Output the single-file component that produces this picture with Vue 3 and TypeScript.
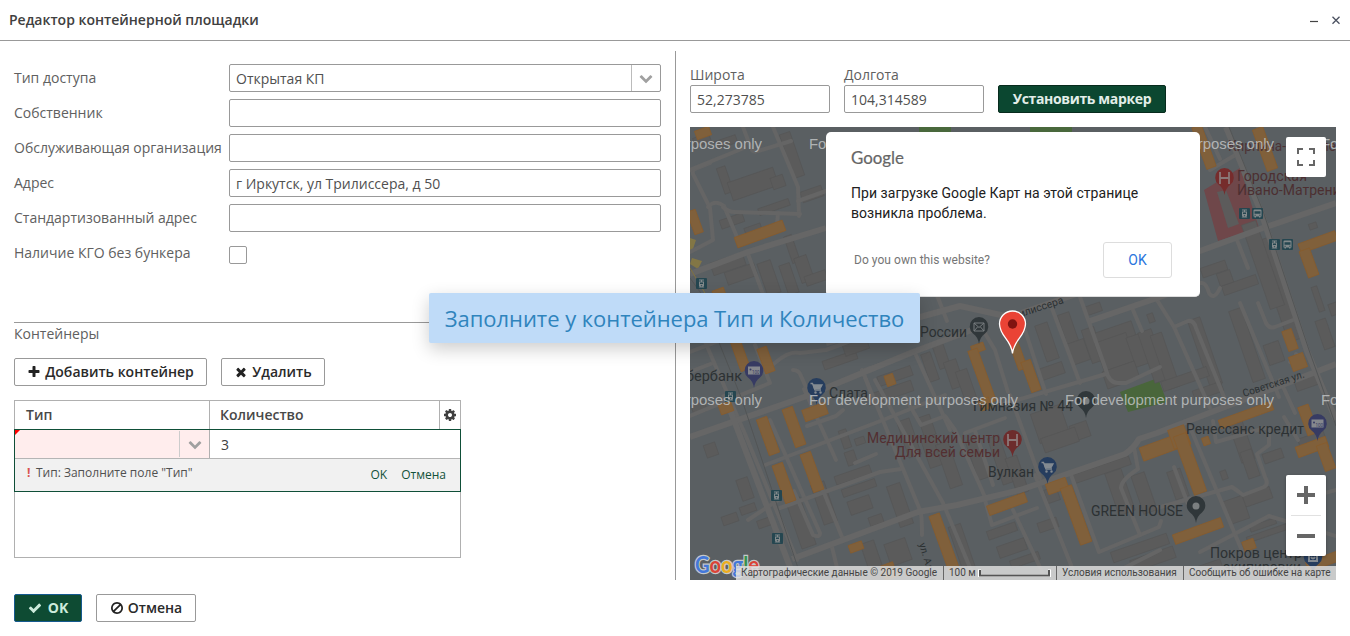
<script setup lang="ts">
import { ref } from 'vue'

interface Field { label: string; value: string; select?: boolean }
type Box = [number, number, number, number, number?]
interface Pin { x: number; y: number; color: string; kind: string }
interface Label { x: number; y: number; text: string; color?: string; end?: boolean; size?: number; rotate?: number; width?: number }

const fields = ref<Field[]>([
  { label: 'Тип доступа', value: 'Открытая КП', select: true },
  { label: 'Собственник', value: '' },
  { label: 'Обслуживающая организация', value: '' },
  { label: 'Адрес', value: 'г Иркутск, ул Трилиссера, д 50' },
  { label: 'Стандартизованный адрес', value: '' },
])

const icons: Record<string, string> = {
  plus: 'M1600 736v192q0 40-28 68t-68 28h-416v416q0 40-28 68t-68 28h-192q-40 0-68-28t-28-68v-416h-416q-40 0-68-28t-28-68v-192q0-40 28-68t68-28h416v-416q0-40 28-68t68-28h192q40 0 68 28t28 68v416h416q40 0 68 28t28 68z',
  times: 'M1490 1322q0 40-28 68l-136 136q-28 28-68 28t-68-28l-294-294-294 294q-28 28-68 28t-68-28l-136-136q-28-28-28-68t28-68l294-294-294-294q-28-28-28-68t28-68l136-136q28-28 68-28t68 28l294 294 294-294q28-28 68-28t68 28l136 136q28 28 28 68t-28 68l-294 294 294 294q28 28 28 68z',
  check: 'M1671 566q0 40-28 68l-724 724-136 136q-28 28-68 28t-68-28l-136-136-362-362q-28-28-28-68t28-68l136-136q28-28 68-28t68 28l294 295 656-657q28-28 68-28t68 28l136 136q28 28 28 68z',
  ban: 'M1440 893q0-161-87-295l-754 753q137 89 297 89 111 0 211.5-43.5t173.5-116.5 116-174.5 43-212.5zm-999 299l755-754q-135-91-300-91-148 0-273 73t-198 199-73 274q0 162 89 299zm1223-299q0 157-61 300t-163.5 246-245 164-298.5 61-298.5-61-245-164-163.5-246-61-300 61-299.5 163.5-245.5 245-164 298.5-61 298.5 61 245 164 163.5 245.5 61 299.5z',
  chevron: 'M1683 808l-742 741q-19 19-45 19t-45-19l-742-741q-19-19-19-45.5t19-45.5l166-165q19-19 45-19t45 19l531 531 531-531q19-19 45-19t45 19l166 165q19 19 19 45.5t-19 45.5z',
  cog: 'M1152 896q0-106-75-181t-181-75-181 75-75 181 75 181 181 75 181-75 75-181zm512-109v222q0 12-8 23t-20 13l-185 28q-19 54-39 91 35 50 107 138 10 12 10 25t-9 23q-27 37-99 108t-94 71q-12 0-26-9l-138-108q-44 23-91 38-16 136-29 186-7 28-36 28h-222q-14 0-24.5-8.5t-11.5-21.5l-28-184q-49-16-90-37l-141 107q-10 9-25 9-14 0-25-11-126-114-165-168-7-10-7-23 0-12 8-23 15-21 51-66.5t54-70.5q-27-50-41-99l-183-27q-13-2-21-12.5t-8-23.5v-222q0-12 8-23t19-13l186-28q14-46 39-92-40-57-107-138-10-12-10-24 0-10 9-23 26-36 98.5-107.5t94.5-71.5q13 0 26 10l138 107q44-23 91-38 16-136 29-186 7-28 36-28h222q14 0 24.5 8.5t11.5 21.5l28 184q49 16 90 37l142-107q9-9 24-9 13 0 25 10 129 119 165 170 7 8 7 22 0 12-8 23-15 21-51 66.5t-54 70.5q26 50 41 98l183 28q13 2 21 12.5t8 23.5z',
}

const roads: string[] = [
  'M743 127L751 148Q753 153 758 151L791 141', 'M773 127L798 187L799 216', 'M798 201L826 191',
  'M710 163L695 169Q691 171 694 176L710 208L713 240L690 252', 'M708 207Q715 199 724 206L737 237Q738 239 741 238L777 225L778 213',
  'M723 207Q728 212 735 212L800 214', 'M748 254L766 302', 'M690 170L744 148',
  'M690 352L735 335L775 322', 'M690 372L713 363', 'M700 330L745 434L797 560', 'M755 345L770 383L690 416',
  'M770 367L776 362Q790 350 800 353L826 350L913 318', 'M793 370Q799 370 801 376L809 394',
  'M863 372L870 390', 'M865 370L900 358', 'M915 353L950 430', 'M883 290L895 325', 'M935 290L947 321',
  'M980 325L995 350L1008 392', 'M1025 330L1046 394', 'M1050 303L1080 383', 'M1080 297L1106 370Q1109 383 1118 383H1126L1160 367',
  'M1000 405L1106 374', 'M1133 310L1142 331', 'M1157 300L1174 327L1210 408', 'M1174 327L1188 321Q1194 320 1196 328L1224 397',
  'M1240 303L1279 397', 'M1258 303L1266 323Q1269 329 1275 327L1293 320', 'M1237 240L1248 268',
  'M1201 283Q1206 282 1209 293Q1214 301 1220 288', 'M1205 127L1220 159', 'M1210 170L1237 154', 'M1258 127L1273 167',
  'M765 465L883 420L945 395', 'M770 420L820 533Q820 538 813 535L794 491', 'M836 460L804 389', 'M780 508L880 472L901 469',
  'M778 500L748 520', 'M832 547L840 580', 'M855 463L876 454', 'M807 426L836 416L843 410', 'M820 483L842 537',
  'M862 370L920 510Q922 514 922 535', 'M875 380L943 503L971 570', 'M905 397L921 425L945 416L955 430L985 497',
  'M965 433L1005 418', 'M975 431L993 485', 'M985 500L992 525L1037 508', 'M1013 510L1046 580', 'M1035 475L1073 570',
  'M1010 395L1040 478', 'M1070 472L1099 552L1140 535L1159 527L1161 521', 'M1134 447L1138 469Q1121 480 1121 488L1140 535',
  'M1190 427L1245 558', 'M1157 508L1232 487L1239 492L1243 495L1264 487Q1269 484 1265 477L1257 454L1269 445V430',
  'M1174 467L1189 507', 'M1213 421L1216 442L1265 428', 'M1284 417L1298 440', 'M1200 552L1269 516', 'M1269 516L1336 536',
  'M1296 354L1300 358L1290 362', 'M1280 380L1295 413', 'M1300 500L1336 490', 'M1100 580L1160 550',
]
const avenues: string[] = [
  'M690 274L748 252L826 228', 'M826 343L960 306L1010 317L1200 251L1260 229L1336 203', 'M690 437L804 397L913 352L985 325',
  'M1090 321L1157 298L1200 282', 'M792 559L918 512L957 505L1020 490L1070 473L1125 454Q1134 448 1139 439L1157 433L1290 382L1336 364',
  'M1226 127L1261 212L1307 351L1336 420', 'M724 394L795 580',
]
const buildings: Box[] = [
  [702,140,17,9],[726,142,22,8],[725,180,9,27],[753,184,48,19],[778,182,13,12],[792,155,11,46],[812,194,22,11],[732,221,24,9],
  [774,207,32,7],[753,229,17,7],[728,264,34,13],[741,274,31,13],[769,278,14,34],[792,249,8,28],[789,279,11,31],[804,269,13,26],[816,278,22,10],
  [840,360,35,9],[856,347,25,11],[895,376,35,10],[890,393,47,11],[930,367,10,29],[941,355,11,27],[954,374,13,28],[966,385,12,31],
  [699,408,14,10],[711,450,12,13],[745,489,12,22],[748,509,16,8],[730,519,16,9],[764,523,13,8],[845,439,8,19],[860,441,10,7],
  [853,475,37,9],[859,488,35,8],[851,458,10,14],[801,523,15,50],[824,503,14,42],[860,505,23,14],[876,520,14,9],[874,563,14,44],[898,552,22,23],
  [900,505,14,43],[909,438,13,38],[932,450,15,34],[949,465,13,46],[927,426,12,21],[978,459,13,41],[1001,460,12,49],[1017,475,12,38],
  [963,551,13,54],[1012,548,29,12],[1002,531,30,9],[1052,495,13,14],[1048,525,20,10],[1025,560,30,8],
  [1094,283,17,12],[1093,309,17,9],[1047,342,13,38],[1070,334,12,43],[1052,371,24,12],[1078,352,19,22],[1093,345,13,35],
  [1116,337,39,21],[1115,352,33,30],[1139,350,17,31],[1121,375,34,18],[1151,318,6,9],[1153,356,14,53],[1165,361,12,57],
  [1205,352,13,70],[1247,345,13,75],[1278,290,14,106],[1263,265,15,89],[1214,269,26,10],[1240,285,36,10],[1225,278,14,13],
  [1274,353,16,21],[1313,226,8,6],[1318,299,6,26],[1325,334,11,30],[1334,309,9,12],[1308,382,26,11],
  [1050,424,31,31],[1080,431,18,16],[1060,440,36,15],[1101,470,61,9],[1120,492,17,44],[1144,493,14,40],[1185,379,48,10],
  [1208,391,30,10],[1242,442,14,40],[1250,464,12,28],[1273,456,20,10],[1224,475,6,9],[1254,498,36,12],[1236,510,21,24],
  [1263,525,27,6],[1268,533,44,6],[1140,548,59,11],[1153,559,45,12],[1203,570,39,10],[1178,484,14,29],[1313,443,27,17],
]
const orange: Box[] = [
  [760,234,51,11],[695,222,9,24],[703,133,15,9],[740,354,10,34],[766,360,10,26],[815,412,24,12],
  [768,436,11,38],[794,427,11,40],[784,483,11,40],[812,472,11,40],[856,547,14,8],[944,542,11,58],[1007,504,40,10],
  [890,380,9,11],[978,348,13,8],[982,376,10,56],[1018,355,9,30],[1031,376,10,32],[1204,147,10,44],[1265,149,11,44],
  [1290,340,10,21],[1298,362,15,15],[1318,242,39,10],[1309,263,11,28],[1165,446,50,14],[1179,437,17,20],[1190,464,13,62],
  [1206,441,7,8],[1246,415,56,9],[1308,420,11,30],[1312,447,32,11],[1326,457,11,27],[1057,486,21,11],[1076,515,12,60],
  [1198,531,51,10],[1249,545,12,10],[1327,560,42,10],[719,293,12,8],[985,404,11,11],[889,571,13,15],[726,408,13,10],
]

const pins: Pin[] = [
  { x: 979, y: 328, color: '#30373a', kind: 'mail' }, { x: 754, y: 372, color: '#373b63', kind: 'money' },
  { x: 816.5, y: 389, color: '#263d5e', kind: 'cart' }, { x: 1086, y: 402, color: '#30373a', kind: 'dot' },
  { x: 1012.5, y: 441, color: '#6d2c2c', kind: 'hospital' }, { x: 1047.5, y: 468, color: '#263d5e', kind: 'cart' },
  { x: 1196, y: 507, color: '#30373a', kind: 'dot' }, { x: 1317.5, y: 425, color: '#373b63', kind: 'money' },
  { x: 1224.5, y: 179, color: '#762c2c', kind: 'hospital' }, { x: 1313, y: 558, color: '#263d5e', kind: 'bag' },
]
const labels: Label[] = [
  { x: 920, y: 337, text: 'России', width: 47 }, { x: 686, y: 381, text: 'бербанк', width: 56 }, { x: 829, y: 398, text: 'Слата', width: 39 },
  { x: 973, y: 411, text: 'Гимназия № 44', width: 100 }, { x: 867, y: 443, text: 'Медицинский центр', color: '#532f31', width: 133 },
  { x: 895, y: 457, text: 'Для всей семьи', color: '#532f31', width: 105 }, { x: 988, y: 477, text: 'Вулкан', width: 46 },
  { x: 1091, y: 516, text: 'GREEN HOUSE', width: 92 }, { x: 1186, y: 434, text: 'Ренессанс кредит', width: 118 },
  { x: 1210, y: 558, text: 'Покров центр', width: 92 }, { x: 1223, y: 572, text: 'экипировки', width: 78 },
  { x: 1228, y: 151, text: 'Кирпича-Шоколе', color: '#4d3335', width: 108 },
  { x: 1237, y: 181, text: 'Городская', color: '#4c2f31', width: 70 }, { x: 1237, y: 195, text: 'Ивано-Матренинская', color: '#4c2f31', width: 142 },
  { x: 1009, y: 321, text: 'Трилиссера', size: 10.5, rotate: -18, width: 58 }, { x: 1244, y: 397, text: 'Советская ул.', size: 10.5, rotate: -18, width: 64 },
  { x: 919, y: 544, text: 'ул. Алмазная', size: 10, rotate: 73, width: 64 },
]
const stops: [number, number, string][] = [
  [1244.5, 213.5, 'tram'], [1257.5, 213.5, 'bus'], [1274.5, 244.5, 'tram'], [1287.5, 244.5, 'bus'], [701.5, 283.5, 'tram'],
  [730.5, 396.5, 'tram'], [776.5, 495.5, 'tram'], [777.5, 538.5, 'tram'],
]
const marks: [number, number][] = [[553,149],[809,149],[1065,149],[1321,149],[553,405],[809,405],[1065,405],[1321,405]]
</script>

<template>
  <div class="window">
    <header class="titlebar">
      <span class="title">Редактор контейнерной площадки</span>
      <span class="tools">
        <svg width="8" height="10" viewBox="0 0 8 10"><path d="M0 6.5H8" stroke="#444" stroke-width="1.2" /></svg>
        <svg width="8" height="10" viewBox="0 0 8 10"><path d="M.5 1.700L7.500 8.700M7.500 1.700L.5 8.700" stroke="#4a5160" stroke-width="1.300" /></svg>
      </span>
    </header>

    <main class="body">
      <section class="left">
        <div class="form">
          <div v-for="f in fields" :key="f.label" class="row">
            <span class="label">{{ f.label }}</span>
            <div class="input">
              <span class="value">{{ f.value }}</span>
              <span v-if="f.select" class="trigger"><svg width="14" height="14" viewBox="0 0 1792 1792"><path :d="icons.chevron" /></svg></span>
            </div>
          </div>
          <div class="row">
            <span class="label">Наличие КГО без бункера</span>
            <span class="checkbox"></span>
          </div>
        </div>

        <div class="group">Контейнеры</div>
        <div class="toolbar">
          <button class="btn add"><svg width="14" height="14" viewBox="0 0 1792 1792"><path :d="icons.plus" /></svg><span>Добавить контейнер</span></button>
          <button class="btn del"><svg width="14" height="14" viewBox="0 0 1792 1792"><path :d="icons.times" /></svg><span>Удалить</span></button>
        </div>

        <div class="grid">
          <div class="head">
            <span class="c1">Тип</span><span class="c2">Количество</span>
            <span class="c3"><svg width="14" height="14" viewBox="0 0 1792 1792"><path :d="icons.cog" /></svg></span>
          </div>
          <div class="editor">
            <div class="cells">
              <div class="bad"><span class="corner"></span><span class="pick"><svg width="14" height="14" viewBox="0 0 1792 1792"><path :d="icons.chevron" /></svg></span></div>
              <div class="qty">3</div>
            </div>
            <div class="errbar">
              <b>!</b><span class="msg">Тип: Заполните поле "Тип"</span>
              <span class="links"><a>OK</a><a>Отмена</a></span>
            </div>
          </div>
        </div>
      </section>

      <section class="right">
        <div class="coords">
          <label><span>Широта</span><div class="input num">52,273785</div></label>
          <label><span>Долгота</span><div class="input num">104,314589</div></label>
          <button class="btn primary">Установить маркер</button>
        </div>

        <div class="map">
          <svg class="canvas" width="646" height="453" viewBox="690 127 646 453">
            <rect x="690" y="127" width="646" height="453" fill="#5a5f62" />
            <path d="M1204 190L1240 168L1259 228L1218 241Z" fill="#6f474a" />
            <path d="M1217 192L1226 190L1239 224L1228 228Z" fill="#5c5b5b" />
            <path d="M919 127H951V132H919ZM1030 127H1072V132H1030Z" fill="#49683c" />
            <path d="M1120 392L1158 378L1167 402L1128 412Z" fill="#49663b" />
            <path d="M690 238L696 240L692 252H690ZM692 258L702 261L698 269L690 264Z" fill="#827645" />
            <g fill="#5b5b5b" stroke="#555555" stroke-width=".6">
              <rect v-for="(b, i) in buildings" :key="i" :x="-b[2] / 2" :y="-b[3] / 2" :width="b[2]" :height="b[3]" :transform="`translate(${b[0]} ${b[1]}) rotate(-19)`" />
            </g>
            <g fill="none" stroke="#656565" stroke-width="4" stroke-linejoin="round" stroke-linecap="round">
              <path v-for="(r, i) in roads" :key="i" :d="r" />
            </g>
            <g fill="none" stroke="#666" stroke-width="6" stroke-linejoin="round">
              <path v-for="(r, i) in avenues" :key="i" :d="r" />
            </g>
            <g fill="none" stroke="#525556" stroke-width="1">
              <path d="M690 278L708 303L720 345L741 397L802 580M1229 127L1263 211L1309 350L1336 426" />
              <path d="M690 268L712 305" stroke="#80723f" />
            </g>
            <g fill="#80603b" stroke="#895c2b" stroke-width=".7">
              <rect v-for="(b, i) in orange" :key="i" :x="-b[2] / 2" :y="-b[3] / 2" :width="b[2]" :height="b[3]" :transform="`translate(${b[0]} ${b[1]}) rotate(-20)`" />
            </g>

            <g v-for="(s, i) in stops" :key="'s' + i" :transform="`translate(${s[0]} ${s[1]})`">
              <rect x="-5.500" y="-5.500" width="11" height="11" rx="1" fill="#254650" />
              <g v-if="s[2] === 'tram'" fill="#82898b"><path d="M-2.500-4h5v1H.5v1h2v5h-5v-5h2v-1h-2zM-3 4L-1.500 3h3L3 4z" /><path d="M-1.500-1h3v1.600h-3zM-.6 1.700h1.200v1h-1.200z" fill="#254650" /></g>
              <g v-else fill="#82898b"><path d="M-4-3q0-1 1-1h6q1 0 1 1v6H3v1H1.500V3h-3v1H-3V3h-1z" /><path d="M-3-2.300h6V.2h-6zM-3 1.300h1.200v1H-3zM1.800 1.300H3v1H1.800z" fill="#254650" /></g>
            </g>

            <g class="labels">
              <text v-for="(l, i) in labels" :key="'l' + i" :transform="`translate(${l.x} ${l.y}) rotate(${l.rotate || 0})`" :font-size="l.size || 14" :fill="l.color || '#2c3133'" :textLength="l.width" lengthAdjust="spacingAndGlyphs">{{ l.text }}</text>
            </g>

            <g v-for="(p, i) in pins" :key="'p' + i" :transform="`translate(${p.x} ${p.y})`">
              <path d="M0 16Q-1 9-6 5.500A9.300 9.300 0 1 1 6 5.500Q1 9 0 16Z" :fill="p.color" />
              <g v-if="p.kind === 'mail'" fill="none" stroke="#777c7e"><path d="M-5-5H5V3H-5ZM-5-5L0-.5L5-5M-5 3L-1.500-1M5 3L1.500-1" /></g>
              <g v-else-if="p.kind === 'money'"><rect x="-6" y="-5.500" width="12" height="8" fill="#85878d" /><text x="-2" y="1.500" font-size="4.500" :fill="p.color" font-family="Roboto">100</text><circle cx="-3.500" cy="-2.500" r="1" :fill="p.color" /></g>
              <g v-else-if="p.kind === 'cart'" fill="none" stroke="#838a91" stroke-width="1.300"><path d="M-6-5.500H-4L-1.500 1H4.500" /><path d="M-3-4H5.500L3.500-.5H-2Z" fill="#838a91" /><circle cx="-1" cy="3.500" r=".6" /><circle cx="4" cy="3.500" r=".6" /></g>
              <path v-else-if="p.kind === 'hospital'" d="M-4.500-7V5M4.500-7V5M-4.500-1H4.500" fill="none" stroke="#8b7777" stroke-width="1.800" />
              <g v-else-if="p.kind === 'bag'" fill="none" stroke="#838a91" stroke-width="2"><path d="M-4-5H4V3H-4ZM-2-1Q0 2 2-1" /></g>
              <circle v-else r="3.500" cy="-1" fill="#7b7f80" />
            </g>

            <g class="marks"><text v-for="(m, i) in marks" :key="'m' + i" :x="m[0]" :y="m[1]" textLength="209" lengthAdjust="spacingAndGlyphs">For development purposes only</text></g>

            <g transform="translate(1012.5 325)">
              <path d="M0 28.500C-1.500 14-12.500 12-13-1A13 13 0 0 1 13-1C12.500 12 1.500 14 0 28.500Z" fill="#ea4335" stroke="#fff" stroke-width="1.300" />
              <circle cy="-1" r="4.700" fill="#811411" />
            </g>

            <text class="brand" x="695" y="573" textLength="64" lengthAdjust="spacingAndGlyphs"><tspan fill="#4478d8">G</tspan><tspan fill="#db4437">o</tspan><tspan fill="#ecad20">o</tspan><tspan fill="#4478d8">g</tspan><tspan fill="#36924d">l</tspan><tspan fill="#db4437">e</tspan></text>
          </svg>

          <div class="credits">
            <span class="cr1">Картографические данные © 2019 Google</span>
            <span class="cr2">100 м <svg width="73" height="10" viewBox="0 0 73 10"><path d="M1.500 1.500V7.500H71.500V1.500" fill="none" stroke="#fff" stroke-width="3" /><path d="M2 2V7.500H71V2" fill="none" stroke="#555" stroke-width="2" /></svg></span>
            <span class="cr3">Условия использования</span>
            <span class="cr4">Сообщить об ошибке на карте</span>
          </div>

          <div class="fullscreen"><svg width="18" height="18" viewBox="0 0 18 18"><path d="M1 6V1H6M12 1H17V6M17 12V17H12M6 17H1V12" fill="none" stroke="#666" stroke-width="2" /></svg></div>
          <div class="zoom">
            <svg width="18" height="18" viewBox="0 0 18 18"><path d="M9 0V18M0 9H18" stroke="#666" stroke-width="4" /></svg>
            <i></i>
            <svg width="18" height="18" viewBox="0 0 18 18"><path d="M0 9H18" stroke="#666" stroke-width="4" /></svg>
          </div>

          <div class="dialog">
            <svg width="56" height="22" viewBox="0 0 56 22"><text class="gname" x="0" y="17" textLength="53" lengthAdjust="spacingAndGlyphs">Google</text></svg>
            <p>При загрузке Google Карт на этой странице<br />возникла проблема.</p>
            <div class="actions"><span>Do you own this website?</span><button>OK</button></div>
          </div>
        </div>
      </section>
    </main>

    <footer class="footer">
      <button class="btn ok"><svg width="14" height="14" viewBox="0 0 1792 1792"><path :d="icons.check" /></svg><span>OK</span></button>
      <button class="btn cancel"><svg width="14" height="14" viewBox="0 0 1792 1792"><path :d="icons.ban" /></svg><span>Отмена</span></button>
    </footer>

    <div class="toast">Заполните у контейнера Тип и Количество</div>
  </div>
</template>

<style>
html, body { overflow: hidden; background: #fff; }
</style>

<style scoped>
* { box-sizing: border-box; }
.window { position: relative; width: 1350px; height: 636px; background: #fff; font: 14px/20px "Open Sans", sans-serif; color: #404040; display: flex; flex-direction: column; overflow: hidden; }
svg { display: block; flex: none; }
.titlebar { height: 41px; border-bottom: 1px solid #999; display: flex; align-items: center; justify-content: space-between; padding: 0 10px 0 9px; }
.title { font-weight: 600; font-size: 14px; }
.tools { display: flex; gap: 14px; }
.body { display: flex; height: 539px; padding-top: 10px; }
.left { width: 676px; border-right: 1px solid #999; padding: 13px 14px 0 14px; height: 529px; }
.form { display: flex; flex-direction: column; gap: 7px; height: 258px; }
.row { display: flex; height: 28px; }
.label { width: 215px; line-height: 28px; color: #606060; white-space: nowrap; }
.input { flex: 1; height: 28px; border: 1px solid #999; border-radius: 2px; display: flex; padding-left: 6px; line-height: 28px; color: #505050; }
.value { flex: 1; }
.trigger { width: 29px; border-left: 1px solid #bbb; display: flex; align-items: center; justify-content: center; }
.trigger svg, .pick svg { fill: #a0a0a0; }
.checkbox { width: 18px; height: 18px; border: 1px solid #999; border-radius: 2px; margin-top: 7px; }
.group { border-top: 1px solid #999; height: 36px; line-height: 22px; color: #606060; }
.toolbar { display: flex; gap: 14px; }
.btn { height: 28px; border: 1px solid #999; border-radius: 2px; background: #fff; color: #2a2a2a; font: 600 14px/20px "Open Sans", sans-serif; padding: 0; display: flex; align-items: center; justify-content: center; white-space: nowrap; }
.btn svg { fill: #222; margin-right: 4px; }
.add { width: 193px; }
.del { width: 104px; }
.grid { margin-top: 14px; width: 447px; height: 158px; border: 1px solid #b0b0b0; }
.head { display: flex; height: 28px; line-height: 28px; color: #484848; font-weight: 600; }
.c1 { width: 195px; padding-left: 11px; border-right: 1px solid #b0b0b0; }
.c2 { width: 230px; padding-left: 10px; border-right: 1px solid #b0b0b0; }
.c3 { flex: 1; display: flex; align-items: center; justify-content: center; }
.c3 svg { fill: #404040; }
.editor { margin: 0 -1px; border: 1px solid #0f4f38; height: 63px; }
.cells { display: flex; height: 29px; border-bottom: 1px solid #b5b5b5; }
.bad { position: relative; width: 195px; background: #ffeded; border-right: 1px solid #b0b0b0; display: flex; justify-content: flex-end; }
.corner { position: absolute; left: 0; top: 0; border-top: 5px solid #f00; border-right: 5px solid transparent; }
.pick { width: 30px; margin: 1px 0; border-left: 1px solid #ccc; display: flex; align-items: center; justify-content: center; }
.qty { padding-left: 11px; line-height: 30px; }
.errbar { height: 32px; background: #f1f1f1; display: flex; font-size: 12px; line-height: 27px; padding-left: 12px; color: #505050; }
.errbar b { color: #d9534f; width: 9px; }
.msg { flex: 1; }
.links { display: flex; gap: 14px; padding-right: 14px; line-height: 31px; color: #11513a; }
.right { flex: 1; padding: 14px 14px 0 14px; }
.coords { display: flex; gap: 14px; align-items: flex-end; height: 48px; }
.coords label { color: #606060; }
.coords label span { display: block; }
.num { width: 140px; flex: none; }
.primary { width: 168px; background: #0b4730; border-color: #072b1d; color: #e2eee9; font-weight: 700; letter-spacing: -.36px; }
.map { position: relative; margin-top: 14px; width: 646px; height: 453px; overflow: hidden; }
.labels { font-family: Roboto, sans-serif; }
.marks { font: 15px "Liberation Sans", sans-serif; fill: #c5c7c8; fill-opacity: .82; }
.brand { font: 700 23px Lato, sans-serif; stroke: #c5c8ca; stroke-width: 2.5px; paint-order: stroke; }
.credits { position: absolute; right: 0; bottom: 0; height: 14px; width: 600px; background: rgba(226, 226, 226, .82); display: flex; font: 10px/14px Roboto, sans-serif; color: #444; white-space: nowrap; }
.credits span { display: flex; align-items: center; }
.cr1 { width: 207px; padding-left: 5px; }
.cr2 { width: 113px; border-left: 1px solid #666; padding-left: 5px; gap: 2px; }
.cr3 { width: 127px; border-left: 1px solid #666; padding-left: 5px; }
.cr4 { width: 153px; border-left: 1px solid #666; padding-left: 5px; }
.fullscreen { position: absolute; left: 596px; top: 10px; width: 40px; height: 40px; background: #fff; border-radius: 2px; display: grid; place-items: center; }
.zoom { position: absolute; left: 596px; top: 348px; width: 40px; height: 81px; background: #fff; border-radius: 2px; display: flex; flex-direction: column; align-items: center; padding-top: 11px; box-shadow: 0 1px 3px rgba(0, 0, 0, .3); }
.zoom i { width: 30px; height: 1px; background: #e1e1e1; margin: 11px 0; flex: none; }
.dialog { position: absolute; left: 136px; top: 5px; width: 374px; height: 165px; background: #fff; border-radius: 5px; border-bottom: 1px solid #ddd; padding: 15px 28px 0 25px; font-family: Roboto, sans-serif; color: #222; }
.gname { font: 16.5px Lato, sans-serif; fill: #666; stroke: #666; stroke-width: .2px; }
.dialog p { margin: 14px 0 19px; font-size: 14px; line-height: 20px; letter-spacing: .05px; color: #212121; white-space: nowrap; }
.actions { display: flex; align-items: center; justify-content: space-between; padding-left: 3px; font-size: 12px; letter-spacing: .04px; color: #757575; }
.actions button { width: 69px; height: 36px; border: 1px solid #ddd; border-radius: 3px; background: #fff; font: 14px Roboto, sans-serif; color: #2a75dd; }
.footer { display: flex; gap: 14px; padding: 14px 14px 0; }
.ok { width: 68px; background: #0e4b33; border-color: #155a8f; color: #cdebdc; font-weight: 700; }
.ok svg { fill: #cdebdc; margin-right: 6px; }
.cancel { width: 100px; }
.toast { position: absolute; left: 429px; top: 293px; width: 491px; height: 50px; border-radius: 2px; background: #bfdbf8; color: #2f84bd; font-size: 22px; line-height: 51px; letter-spacing: -.05px; text-align: center; white-space: nowrap; box-shadow: 0 6px 18px rgba(0, 0, 0, .2); }
</style>
